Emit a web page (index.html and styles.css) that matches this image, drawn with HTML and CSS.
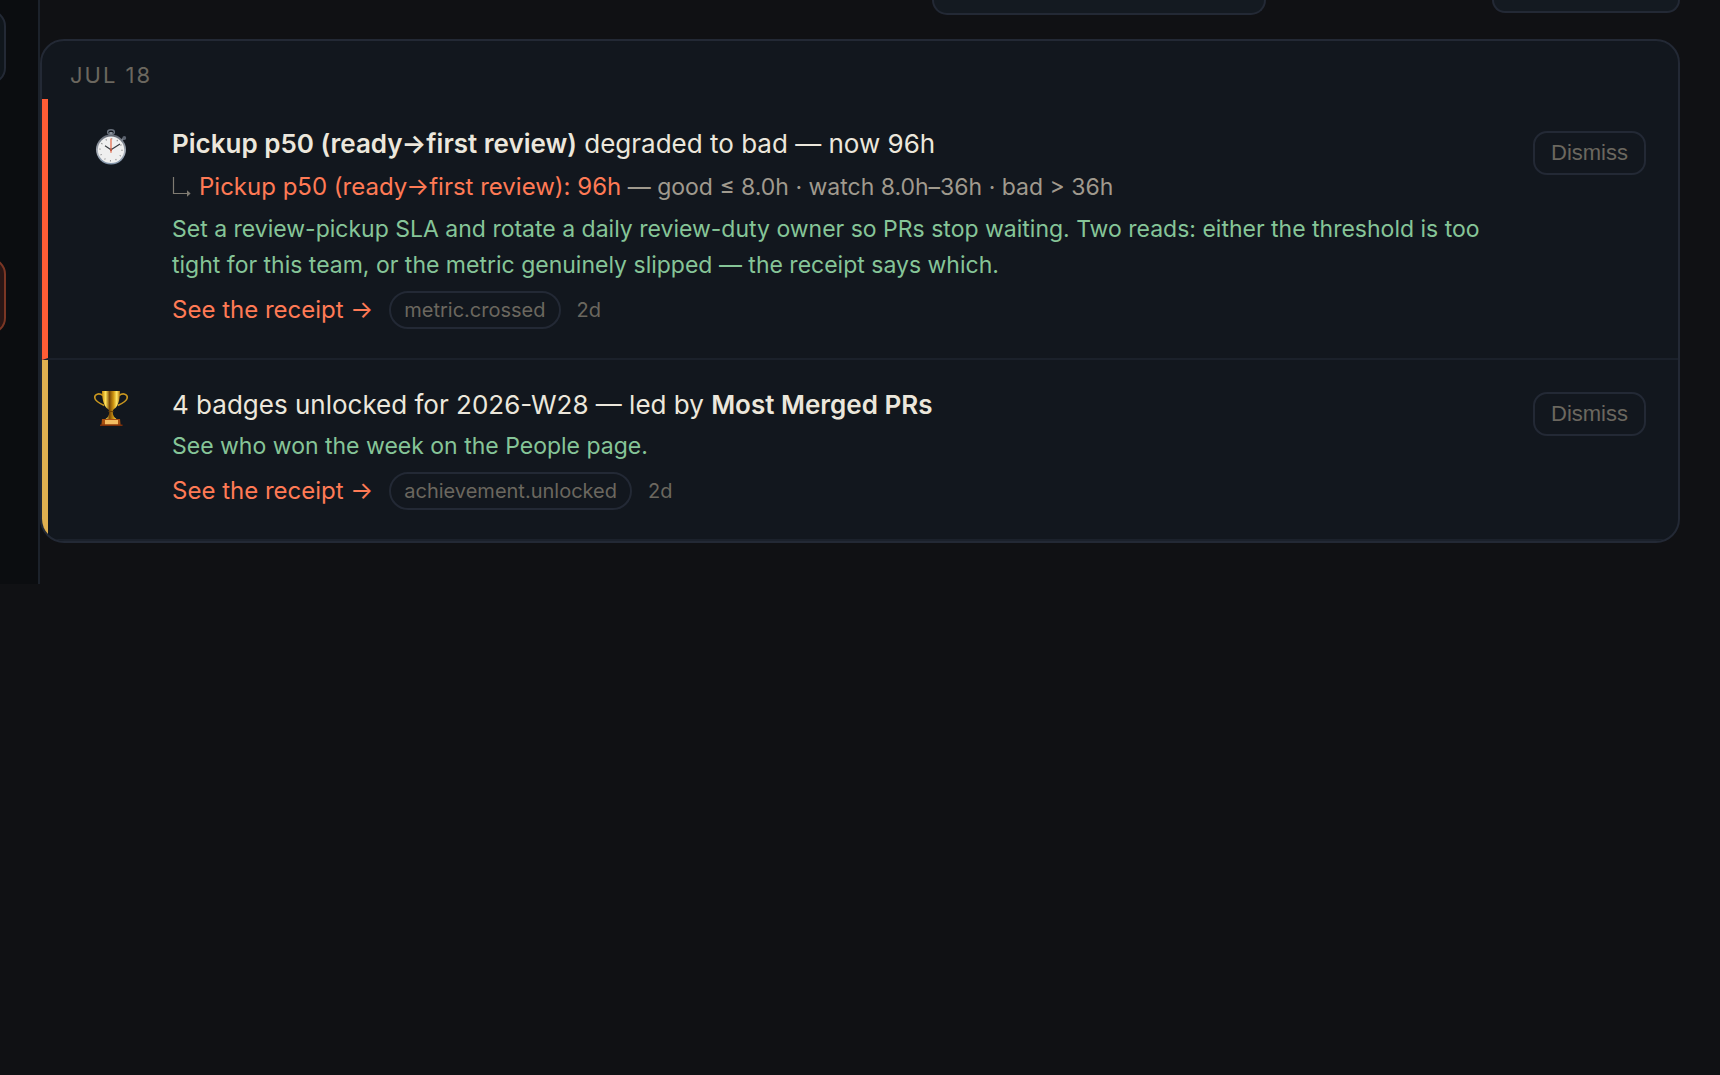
FILE: index.html
```html
<!DOCTYPE html>
<html lang="en">
<head>
    <meta charset="UTF-8">
    <meta name="viewport" content="width=device-width, initial-scale=1.0">
    <title>Feed</title>
    <link rel="stylesheet" href="styles.css">
</head>
<body>
    <div class="layout">
        <aside class="sidebar">
            <div class="side-item"></div>
            <div class="side-item side-alert"></div>
        </aside>

        <main class="main">
            <div class="toolbar">
                <div class="tool tool-wide"></div>
                <div class="tool tool-small"></div>
            </div>

            <section class="feed">
                <h2 class="feed-date">Jul 18</h2>

                <article class="row row-bad">
                    <svg class="row-icon" viewBox="0 0 36 36" aria-hidden="true">
                        <defs>
                            <linearGradient id="rim" x1="0" y1="0" x2="0" y2="1">
                                <stop offset="0" stop-color="#626873"/>
                                <stop offset="0.6" stop-color="#a9b0ba"/>
                                <stop offset="1" stop-color="#7f92a8"/>
                            </linearGradient>
                        </defs>
                        <ellipse cx="18" cy="3.2" rx="3.4" ry="2.4" fill="none" stroke="#69717d" stroke-width="1.4"/>
                        <rect x="16.4" y="3" width="3.2" height="5" fill="#8b929c"/>
                        <path d="M28.5 11.5l2.5-2.5" stroke="#7f8690" stroke-width="2"/>
                        <circle cx="31.3" cy="9" r="1.9" fill="#5b626e"/>
                        <circle cx="18" cy="20.6" r="15" fill="url(#rim)"/>
                        <circle cx="18" cy="20.8" r="13.2" fill="#efefef"/>
                        <circle cx="18" cy="20.8" r="11" fill="none" stroke="#8b8b8b" stroke-width="1.4" stroke-dasharray="1 4.76"/>
                        <path d="M18 20.8V9.5M18 20.8v3" stroke="#e7886f" stroke-width="1.6"/>
                        <path d="M18 20.8l-6-4M18 20.8l9-5.8" stroke="#3a3d42" stroke-width="1.2"/>
                        <circle cx="18" cy="20.8" r="1.2" fill="#b5523f"/>
                    </svg>
                    <div class="row-body">
                        <p class="title"><strong>Pickup p50 (ready→first review)</strong> degraded to bad — now 96h</p>
                        <p class="cause">
                            <svg class="elbow" viewBox="0 0 20 20" aria-hidden="true">
                                <path d="M1.5 0v16.5H16" fill="none" stroke="currentColor" stroke-width="1.2"/>
                                <path d="M15 13.2l3.6 3.3-3.6 3.3z" fill="currentColor"/>
                            </svg>
                            <span><a class="link" href="#">Pickup p50 (ready→first review): 96h</a> — good ≤ 8.0h · watch 8.0h–36h · bad &gt; 36h</span>
                        </p>
                        <p class="advice">Set a review-pickup SLA and rotate a daily review-duty owner so PRs stop waiting. Two reads: either the threshold is too tight for this team, or the metric genuinely slipped — the receipt says which.</p>
                        <div class="meta">
                            <a class="link" href="#">See the receipt →</a>
                            <span class="pill">metric.crossed</span>
                            <span class="age">2d</span>
                        </div>
                    </div>
                    <button class="dismiss" type="button">Dismiss</button>
                </article>

                <article class="row row-award">
                    <svg class="row-icon" viewBox="0 0 36 36" aria-hidden="true">
                        <defs>
                            <linearGradient id="gold">
                                <stop offset="0" stop-color="#c78a08"/>
                                <stop offset="0.2" stop-color="#ffe25a"/>
                                <stop offset="0.42" stop-color="#7c4a06"/>
                                <stop offset="0.65" stop-color="#d39a12"/>
                                <stop offset="0.82" stop-color="#ffe768"/>
                                <stop offset="1" stop-color="#a86c05"/>
                            </linearGradient>
                        </defs>
                        <path d="M10 5.5C6 2.6 1.2 4 1.8 8c.5 3.5 5 5.5 9.5 7.500M26 5.5C30 2.6 34.8 4 34.2 8c-.5 3.5-5 5.5-9.5 7.5" fill="none" stroke="#c8961f" stroke-width="1.6"/>
                        <path d="M9 1h18c0 9-2 15.5-6 18-1 .7-1.4 2-1.2 4 .2 2.5 1.5 4.5 3.7 6h-11c2.200-1.5 3.5-3.500 3.700-6 .2-2-.2-3.300-1.200-4C11 16.5 9 10 9 1z" fill="url(#gold)"/>
                        <path d="M15.5 21.5h5" stroke="#704204" stroke-width="1"/>
                        <path d="M9 29h18l.6 6H8.400z" fill="#a8500f"/>
                        <rect x="12" y="30" width="13" height="4.5" fill="#f3bd62"/>
                        <rect x="7" y="34.5" width="22.5" height="1.5" fill="#7d2f08"/>
                    </svg>
                    <div class="row-body">
                        <p class="title">4 badges unlocked for 2026-W28 — led by <strong>Most Merged PRs</strong></p>
                        <p class="advice">See who won the week on the People page.</p>
                        <div class="meta">
                            <a class="link" href="#">See the receipt →</a>
                            <span class="pill">achievement.unlocked</span>
                            <span class="age">2d</span>
                        </div>
                    </div>
                    <button class="dismiss" type="button">Dismiss</button>
                </article>
            </section>
        </main>
    </div>
</body>
</html>
```
FILE: styles.css
```css
body {
    font-family: Inter, "Liberation Sans", sans-serif;
    background-color: #101114;
    color: #ece7dc;
    margin: 0;
}
h2, p {
    margin: 0;
    font-weight: 400;
}
.layout {
    display: grid;
    grid-template-columns: 40px 1fr;
}
/* sidebar */
.sidebar {
    display: flex;
    flex-direction: column;
    gap: 174px;
    padding-top: 10px;
    background-color: #0b0d10;
    border-right: 2px solid #1c222b;
    overflow: hidden;
}
.side-item {
    box-sizing: border-box;
    width: 46px;
    height: 74px;
    margin-left: -40px;
    background-color: #10161c;
    border: 2px solid #232935;
    border-radius: 16px;
}
.side-alert {
    height: 76px;
    background-color: #2a1615;
    border-color: #7b3624;
}
/* main column */
.main {
    padding: 0 40px 41px 0;
}
.toolbar {
    display: flex;
    justify-content: flex-end;
    align-items: flex-start;
    gap: 226px;
    margin-bottom: 24px;
}
.tool {
    box-sizing: border-box;
    height: 13px;
    background-color: #141a21;
    border: 2px solid #232935;
    border-top: none;
    border-radius: 0 0 16px 16px;
}
.tool-wide {
    width: 334px;
    height: 15px;
}
.tool-small {
    width: 188px;
}
/* feed card */
.feed {
    background-color: #12171e;
    border: 2px solid #232935;
    border-radius: 24px;
    overflow: hidden;
}
.feed-date {
    padding: 19px 28px 9px;
    font-size: 22px;
    line-height: 30px;
    letter-spacing: 2px;
    text-transform: uppercase;
    color: #6b675f;
}
.row {
    display: flex;
    align-items: flex-start;
    padding: 26px 32px 29px;
    border-left: 6px solid;
    border-bottom: 2px solid #1b212b;
}
.row-bad {
    border-left-color: #ff5c35;
}
.row-award {
    border-left-color: #e0b050;
}
.row-icon {
    flex: none;
    width: 36px;
    height: 36px;
    margin: 4px 43px 0 13px;
}
.row-body {
    flex: 1;
    margin-right: 28px;
}
.title {
    font-size: 26px;
    line-height: 38px;
    margin-bottom: 4px;
}
.title strong {
    font-weight: 600;
}
.cause {
    display: flex;
    align-items: center;
    gap: 7px;
    margin: 6px 0;
    font-size: 23px;
    line-height: 36px;
    color: #a09a8e;
}
.elbow {
    width: 20px;
    height: 20px;
    color: #7f7b72;
}
.advice {
    font-size: 23px;
    line-height: 36px;
    color: #86c598;
}
.link {
    font-size: 24px;
    color: #ff7a55;
    text-decoration: none;
}
.meta {
    display: flex;
    align-items: center;
    gap: 16px;
    margin-top: 8px;
    line-height: 38px;
}
.pill {
    padding: 0 13px;
    font-size: 20px;
    line-height: 34px;
    color: #6b675f;
    border: 2px solid #232935;
    border-radius: 20px;
}
.age {
    font-size: 20px;
    color: #6b675f;
}
.dismiss {
    flex: none;
    height: 44px;
    margin-top: 6px;
    padding: 0 16px;
    font-family: "Liberation Sans", Arial, sans-serif;
    font-size: 22px;
    color: #6b675f;
    background-color: transparent;
    border: 2px solid #232935;
    border-radius: 14px;
    cursor: pointer;
}
```
